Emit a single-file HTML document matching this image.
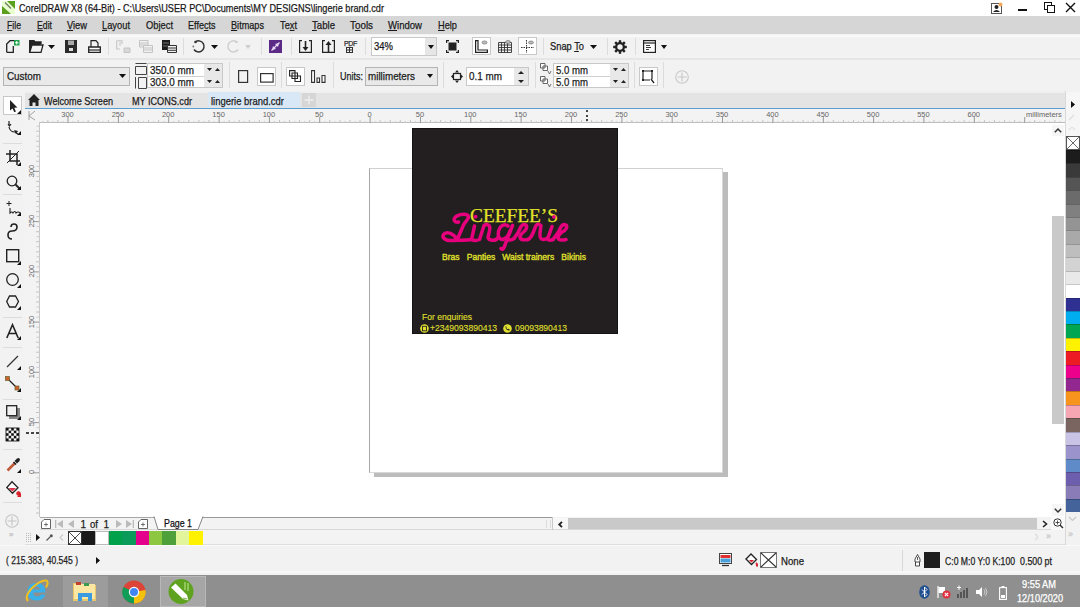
<!DOCTYPE html><html><head><meta charset="utf-8"><style>
*{margin:0;padding:0;box-sizing:border-box}
html,body{width:1080px;height:607px;overflow:hidden;background:#f0f0f0;font-family:"Liberation Sans",sans-serif;font-size:11px;color:#222}
.a{position:absolute}
.t{position:absolute;white-space:nowrap;line-height:1;-webkit-text-stroke:0.25px currentColor}
svg{position:absolute;overflow:visible}
</style></head><body>
<div class="a" style="left:0;top:0;width:1080px;height:16px;background:#fff"></div>
<svg style="left:2px;top:1px" width="13" height="13" viewBox="0 0 13 13"><rect x="0" y="0" width="13" height="13" fill="#5aa01c"/><polygon points="0,0 5,0 13,8 13,13 9,13 0,5" fill="#e8ffd0"/><path d="M3 1.5 L9 7.5" stroke="#6a7a60" stroke-width="1.2"/></svg>
<div class="t" id="t1" style="left:19px;top:3px;font-size:10.5px;color:#1a1a1a;transform:scaleX(0.8724);transform-origin:0 0;">CorelDRAW X8 (64-Bit) - C:\Users\USER PC\Documents\MY DESIGNS\lingerie brand.cdr</div>
<svg style="left:991px;top:2px" width="12" height="12" viewBox="0 0 12 12"><rect x="0.5" y="1.5" width="10" height="10" fill="#fff" stroke="#555"/><circle cx="5.5" cy="5" r="2" fill="#222"/><path d="M2 10 Q5.5 6 9 10Z" fill="#222"/><circle cx="9.5" cy="2.5" r="2" fill="#f5a65b"/></svg>
<div class="a" style="left:1018px;top:9px;width:9px;height:2px;background:#111"></div>
<svg style="left:1044px;top:2px" width="11" height="11" viewBox="0 0 11 11"><rect x="0.5" y="0.5" width="7" height="7" fill="none" stroke="#111"/><rect x="3.5" y="3.5" width="7" height="7" fill="#fff" stroke="#111"/></svg>
<svg style="left:1065px;top:3px" width="11" height="9" viewBox="0 0 11 9"><path d="M1 0 L10 9 M10 0 L1 9" stroke="#111" stroke-width="1.4"/></svg>
<div class="a" style="left:0;top:16px;width:1080px;height:18px;background:#d6d6d6"></div>
<div class="t" id="t2" style="left:7px;top:20px;font-size:11px;color:#1a1a1a;transform:scaleX(0.7887);transform-origin:0 0;"><u>F</u>ile</div>
<div class="t" id="t3" style="left:37px;top:20px;font-size:11px;color:#1a1a1a;transform:scaleX(0.7908);transform-origin:0 0;"><u>E</u>dit</div>
<div class="t" id="t4" style="left:67px;top:20px;font-size:11px;color:#1a1a1a;transform:scaleX(0.8454);transform-origin:0 0;"><u>V</u>iew</div>
<div class="t" id="t5" style="left:102px;top:20px;font-size:11px;color:#1a1a1a;transform:scaleX(0.8473);transform-origin:0 0;"><u>L</u>ayout</div>
<div class="t" id="t6" style="left:146px;top:20px;font-size:11px;color:#1a1a1a;transform:scaleX(0.8491);transform-origin:0 0;">Object</div>
<div class="t" id="t7" style="left:188px;top:20px;font-size:11px;color:#1a1a1a;transform:scaleX(0.8224);transform-origin:0 0;">Effe<u>c</u>ts</div>
<div class="t" id="t8" style="left:231px;top:20px;font-size:11px;color:#1a1a1a;transform:scaleX(0.8302);transform-origin:0 0;"><u>B</u>itmaps</div>
<div class="t" id="t9" style="left:280px;top:20px;font-size:11px;color:#1a1a1a;transform:scaleX(0.8421);transform-origin:0 0;">Te<u>x</u>t</div>
<div class="t" id="t10" style="left:312px;top:20px;font-size:11px;color:#1a1a1a;transform:scaleX(0.8746);transform-origin:0 0;"><u>T</u>able</div>
<div class="t" id="t11" style="left:350px;top:20px;font-size:11px;color:#1a1a1a;transform:scaleX(0.8954);transform-origin:0 0;">T<u>o</u>ols</div>
<div class="t" id="t12" style="left:388px;top:20px;font-size:11px;color:#1a1a1a;transform:scaleX(0.8687);transform-origin:0 0;"><u>W</u>indow</div>
<div class="t" id="t13" style="left:438px;top:20px;font-size:11px;color:#1a1a1a;transform:scaleX(0.8392);transform-origin:0 0;"><u>H</u>elp</div>
<div class="a" style="left:0;top:34px;width:1080px;height:24px;background:#f2f2f2"></div>
<div class="a" style="left:0;top:35px;width:1080px;height:1.5px;background:#f9f9f9"></div>
<svg style="left:6px;top:40px" width="14" height="13" viewBox="0 0 14 13"><path d="M0.7 12.3 V4 L4 0.7 H8 M0.7 12.3 H7.3 V6" fill="none" stroke="#222" stroke-width="1.3"/><rect x="8" y="0" width="5.5" height="5.5" fill="#1fa04a"/><path d="M10.75 1 V4.5 M9 2.75 H12.5" stroke="#fff" stroke-width="1"/></svg>
<svg style="left:29px;top:40px" width="15" height="13" viewBox="0 0 15 13"><path d="M0.7 12.3 V0.7 H5 L6 2 H12 V4" fill="#222" stroke="#222" stroke-width="1.3"/><path d="M0.7 12.3 L3 5 H14 L12 12.3 Z" fill="#f2f2f2" stroke="#222" stroke-width="1.3"/></svg>
<svg style="left:48px;top:45px" width="7" height="4" viewBox="0 0 7 4"><polygon points="0,0 7,0 3.5,4" fill="#111"/></svg>
<svg style="left:65px;top:40px" width="12" height="13" viewBox="0 0 12 13"><rect x="0" y="0" width="12" height="13" fill="#2a2a2a"/><rect x="3" y="0.5" width="6" height="4.5" fill="#aaa"/><rect x="4" y="8" width="4" height="3" fill="#ddd"/></svg>
<svg style="left:88px;top:40px" width="13" height="13" viewBox="0 0 13 13"><path d="M3 7 V0.7 H8 L10 3 V7" fill="none" stroke="#222" stroke-width="1.2"/><path d="M0.7 7 V12.3 H12.3 V7 Z" fill="#fff" stroke="#222" stroke-width="1.3"/><path d="M0.7 10 H12.3" stroke="#222" stroke-width="1.2"/></svg>
<div class="a" style="left:108px;top:38px;width:1px;height:17px;background:#dcdcdc"></div>
<svg style="left:116px;top:40px" width="15" height="13" viewBox="0 0 15 13"><path d="M0.7 0.7 H6 V4 M0.7 0.7 V9 H4 M3 3 H5 M3 5 H5" fill="none" stroke="#c4c4c4" stroke-width="1.1"/><path d="M8 8 H14 V12.5 H8 Z" fill="#d8d8d8" stroke="#c4c4c4" stroke-width="1"/></svg>
<svg style="left:139px;top:40px" width="14" height="13" viewBox="0 0 14 13"><path d="M0.5 0.5 H9 V7 H0.5 Z M0.5 3 H9 M0.5 5 H9" fill="none" stroke="#c4c4c4" stroke-width="1"/><path d="M4.5 5.5 H13.5 V12.5 H4.5 Z M4.5 8 H13.5 M4.5 10 H13.5" fill="#f2f2f2" stroke="#c4c4c4" stroke-width="1"/></svg>
<svg style="left:162px;top:40px" width="15" height="13" viewBox="0 0 15 13"><rect x="0" y="0" width="8" height="10" fill="#1a1a1a"/><path d="M1 3 H7 M1 6 H7" stroke="#888" stroke-width="0.8"/><path d="M5.5 5.5 H14.5 V12.5 H5.5 Z M5.5 8 H14.5 M5.5 10.3 H14.5" fill="#f2f2f2" stroke="#333" stroke-width="1"/></svg>
<div class="a" style="left:183px;top:38px;width:1px;height:17px;background:#dcdcdc"></div>
<svg style="left:192px;top:40px" width="13" height="13" viewBox="0 0 13 13"><path d="M4 1.5 A5.5 5.5 0 1 1 2 9.5" fill="none" stroke="#333" stroke-width="1.5" stroke-dasharray="0"/><circle cx="3.5" cy="2" r="1.3" fill="#333"/><circle cx="1.3" cy="6.5" r="0.9" fill="#777"/></svg>
<svg style="left:211px;top:45px" width="7" height="4" viewBox="0 0 7 4"><polygon points="0,0 7,0 3.5,4" fill="#111"/></svg>
<svg style="left:227px;top:40px" width="13" height="13" viewBox="0 0 13 13"><path d="M9 1.5 A5.5 5.5 0 1 0 11 9.5" fill="none" stroke="#cfcfcf" stroke-width="1.5"/><circle cx="9.5" cy="2" r="1.3" fill="#cfcfcf"/></svg>
<svg style="left:245px;top:45px" width="6" height="4" viewBox="0 0 6 4"><polygon points="0,0 6,0 3.0,4" fill="#cfcfcf"/></svg>
<div class="a" style="left:261px;top:38px;width:1px;height:17px;background:#dcdcdc"></div>
<svg style="left:269px;top:40px" width="13" height="13" viewBox="0 0 13 13"><rect width="13" height="13" fill="#5b2a86"/><path d="M2.5 10.5 L10.5 2.5" stroke="#e8d8f8" stroke-width="1.3"/><polygon points="4,6 7,9 3,10" fill="#e8d8f8"/><polygon points="6,4 9,7 10,3" fill="#e8d8f8"/></svg>
<div class="a" style="left:291px;top:38px;width:1px;height:17px;background:#dcdcdc"></div>
<svg style="left:299px;top:40px" width="13" height="13" viewBox="0 0 13 13"><path d="M3 0.6 H0.6 V12.4 H12.4 V0.6 H10" fill="none" stroke="#222" stroke-width="1.2"/><path d="M6.5 1 V9" stroke="#222" stroke-width="1.6"/><polygon points="3.5,7 9.5,7 6.5,11" fill="#222"/></svg>
<svg style="left:322px;top:40px" width="13" height="13" viewBox="0 0 13 13"><path d="M3 0.6 H0.6 V12.4 H12.4 V0.6 H10" fill="none" stroke="#222" stroke-width="1.2"/><path d="M6.5 4 V12" stroke="#222" stroke-width="1.6"/><polygon points="3.5,5 9.5,5 6.5,1" fill="#222"/></svg>
<div class="t" style="left:344px;top:40px;font-size:7px;color:#333;letter-spacing:-0.3px">PDF</div>
<svg style="left:346px;top:47px" width="7" height="6" viewBox="0 0 7 6"><rect x="0.5" y="0.5" width="6" height="5" fill="none" stroke="#333"/><path d="M0.5 3 H6.5 M3.5 0.5 V5.5" stroke="#333"/></svg>
<div class="a" style="left:365px;top:38px;width:1px;height:17px;background:#dcdcdc"></div>
<div class="a" style="left:371px;top:37px;width:66px;height:19px;background:#fff;border:1px solid #c8c8c8"></div>
<div class="a" style="left:425px;top:38px;width:11px;height:17px;background:#e6e6e6"></div>
<svg style="left:428px;top:45px" width="6" height="4" viewBox="0 0 6 4"><polygon points="0,0 6,0 3.0,4" fill="#111"/></svg>
<div class="t" id="t14" style="left:374px;top:41px;font-size:11px;color:#1a1a1a;transform:scaleX(0.8624);transform-origin:0 0;">34%</div>
<svg style="left:446px;top:40px" width="13" height="13" viewBox="0 0 13 13"><path d="M0.6 3 V0.6 H3 M10 0.6 H12.4 V3 M12.4 10 V12.4 H10 M3 12.4 H0.6 V10" fill="none" stroke="#222" stroke-width="1.2"/><rect x="2.5" y="2.5" width="8" height="8" fill="#222"/></svg>
<div class="a" style="left:472px;top:37px;width:19px;height:18px;background:#fff;border:1px solid #c8c8c8"></div>
<svg style="left:475px;top:40px" width="13" height="13" viewBox="0 0 13 13"><path d="M0.6 0.6 V12.4 H12.4 V10 H3 V0.6 Z" fill="none" stroke="#222" stroke-width="1.2"/><ellipse cx="9.5" cy="2.5" rx="2.5" ry="1.6" fill="#bbb" stroke="#666" stroke-width="0.6"/></svg>
<svg style="left:498px;top:40px" width="14" height="13" viewBox="0 0 14 13"><path d="M0.5 2.5 H13.5 V12.5 H0.5 Z M0.5 5 H13.5 M0.5 7.5 H13.5 M0.5 10 H13.5 M3.5 2.5 V12.5 M6.5 2.5 V12.5 M9.5 2.5 V12.5" fill="none" stroke="#333" stroke-width="0.9"/><ellipse cx="10" cy="2" rx="2.5" ry="1.5" fill="#bbb" stroke="#666" stroke-width="0.6"/></svg>
<div class="a" style="left:518px;top:37px;width:19px;height:18px;background:#fff;border:1px solid #c8c8c8"></div>
<svg style="left:521px;top:40px" width="13" height="13" viewBox="0 0 13 13"><path d="M5.5 0 V13 M0 7.5 H13" stroke="#333" stroke-width="1" stroke-dasharray="1.5 1"/><ellipse cx="10" cy="2.5" rx="2.5" ry="1.5" fill="#bbb" stroke="#666" stroke-width="0.6"/></svg>
<div class="a" style="left:543px;top:38px;width:1px;height:17px;background:#dcdcdc"></div>
<div class="t" id="t15" style="left:550px;top:41px;font-size:11px;color:#1a1a1a;transform:scaleX(0.8460);transform-origin:0 0;">Snap <u>T</u>o</div>
<svg style="left:590px;top:45px" width="7" height="4" viewBox="0 0 7 4"><polygon points="0,0 7,0 3.5,4" fill="#111"/></svg>
<div class="a" style="left:607px;top:38px;width:1px;height:17px;background:#dcdcdc"></div>
<svg style="left:613px;top:40px" width="14" height="14" viewBox="0 0 14 14"><g transform="translate(7 7)"><circle r="5" fill="#222"/><g fill="#222"><rect x="-1.2" y="-6.8" width="2.4" height="13.6"/><rect x="-1.2" y="-6.8" width="2.4" height="13.6" transform="rotate(45)"/><rect x="-1.2" y="-6.8" width="2.4" height="13.6" transform="rotate(90)"/><rect x="-1.2" y="-6.8" width="2.4" height="13.6" transform="rotate(135)"/></g><circle r="2.7" fill="#f2f2f2"/></g></svg>
<div class="a" style="left:635px;top:38px;width:1px;height:17px;background:#dcdcdc"></div>
<svg style="left:643px;top:40px" width="13" height="13" viewBox="0 0 13 13"><rect x="0.6" y="0.6" width="11.8" height="11.8" fill="#fff" stroke="#222" stroke-width="1.2"/><path d="M0.6 3 H12.4" stroke="#222" stroke-width="1.2"/><path d="M3 5.5 H7 M3 7.5 H8 M3 9.5 H6" stroke="#222" stroke-width="0.9"/></svg>
<svg style="left:661px;top:45px" width="6" height="4" viewBox="0 0 6 4"><polygon points="0,0 6,0 3.0,4" fill="#111"/></svg>
<div class="a" style="left:0;top:58px;width:1080px;height:33px;background:#f2f2f2"></div>
<div class="a" style="left:0;top:58px;width:1080px;height:1.5px;background:#e6e6e6"></div>
<div class="a" style="left:3px;top:67px;width:127px;height:19px;background:#e9e9e9;border:1px solid #b4b4b4"></div>
<div class="t" id="t16" style="left:7px;top:71px;font-size:11px;color:#1a1a1a;transform:scaleX(0.8969);transform-origin:0 0;">Custom</div>
<svg style="left:119px;top:74px" width="7" height="4" viewBox="0 0 7 4"><polygon points="0,0 7,0 3.5,4" fill="#111"/></svg>
<svg style="left:135px;top:63px" width="12" height="26" viewBox="0 0 12 26"><path d="M0.5 0.5 H11.5 M0.5 3.5 H11.5 V11.5 H0.5 Z" fill="none" stroke="#444" stroke-width="1"/><path d="M0.5 14 V25.5 M3.5 14.5 H11.5 V25.5 H3.5 Z" fill="none" stroke="#444" stroke-width="1"/></svg>
<div class="a" style="left:147px;top:63px;width:76px;height:25px;background:#fff;border:1px solid #c8c8c8"></div>
<div class="a" style="left:147px;top:76px;width:76px;height:1px;background:#d0d0d0"></div>
<div class="a" style="left:204px;top:64px;width:18px;height:23px;background:#e8e8e8"></div>
<div class="t" id="t17" style="left:150px;top:65px;font-size:11px;color:#1a1a1a;transform:scaleX(0.8994);transform-origin:0 0;">350.0 mm</div>
<div class="t" id="t18" style="left:150px;top:77px;font-size:11px;color:#1a1a1a;transform:scaleX(0.8994);transform-origin:0 0;">303.0 mm</div>
<svg style="left:207px;top:68px" width="13" height="4" viewBox="0 0 13 4"><polygon points="0,0 5,0 2.5,3" fill="#222"/><polygon points="8,3 13,3 10.5,0" fill="#222"/></svg>
<svg style="left:207px;top:80px" width="13" height="4" viewBox="0 0 13 4"><polygon points="0,0 5,0 2.5,3" fill="#222"/><polygon points="8,3 13,3 10.5,0" fill="#222"/></svg>
<div class="a" style="left:229px;top:62px;width:1px;height:26px;background:#dcdcdc"></div>
<svg style="left:238px;top:70px" width="11" height="13" viewBox="0 0 11 13"><rect x="0.6" y="0.6" width="9" height="11.8" fill="none" stroke="#333" stroke-width="1.2"/></svg>
<div class="a" style="left:257px;top:67px;width:19px;height:19px;background:#fff;border:1px solid #c8c8c8"></div>
<svg style="left:260px;top:73px" width="14" height="10" viewBox="0 0 14 10"><rect x="0.6" y="0.6" width="12.5" height="8.5" fill="none" stroke="#333" stroke-width="1.2"/></svg>
<div class="a" style="left:281px;top:62px;width:1px;height:26px;background:#dcdcdc"></div>
<div class="a" style="left:286px;top:67px;width:19px;height:19px;background:#fff;border:1px solid #c8c8c8"></div>
<svg style="left:289px;top:70px" width="13" height="13" viewBox="0 0 13 13"><path d="M0.6 0.6 H6 V6 H0.6 Z M3 3 H8.5 V8.5 H3 Z M6 6 H11.5 V11.5 H6 Z" fill="#fff" stroke="#222" stroke-width="1.1"/></svg>
<svg style="left:311px;top:70px" width="15" height="13" viewBox="0 0 15 13"><path d="M0.6 0.6 H3.5 V12.4 H0.6 Z M6 8 H8.5 V12.4 H6 Z M11 5.5 H14 V12.4 H11 Z" fill="#fff" stroke="#333" stroke-width="1.1"/></svg>
<div class="a" style="left:333px;top:62px;width:1px;height:26px;background:#dcdcdc"></div>
<div class="t" id="t19" style="left:340px;top:71px;font-size:11px;color:#1a1a1a;transform:scaleX(0.8178);transform-origin:0 0;">Units:</div>
<div class="a" style="left:365px;top:67px;width:73px;height:19px;background:#e9e9e9;border:1px solid #b4b4b4"></div>
<div class="t" id="t20" style="left:368px;top:71px;font-size:11px;color:#1a1a1a;transform:scaleX(0.8942);transform-origin:0 0;">millimeters</div>
<svg style="left:427px;top:74px" width="6" height="4" viewBox="0 0 6 4"><polygon points="0,0 6,0 3.0,4" fill="#111"/></svg>
<div class="a" style="left:443px;top:62px;width:1px;height:26px;background:#dcdcdc"></div>
<svg style="left:451px;top:70px" width="12" height="13" viewBox="0 0 12 13"><rect x="2.5" y="3.5" width="7" height="6" fill="none" stroke="#222" stroke-width="1.2"/><polygon points="6,0 8,2.5 4,2.5" fill="#222"/><polygon points="6,13 8,10.5 4,10.5" fill="#222"/><polygon points="0,6.5 2,4.5 2,8.5" fill="#222"/><polygon points="12,6.5 10,4.5 10,8.5" fill="#222"/></svg>
<div class="a" style="left:466px;top:67px;width:63px;height:19px;background:#fff;border:1px solid #c8c8c8"></div>
<div class="a" style="left:514px;top:68px;width:14px;height:17px;background:#e8e8e8"></div>
<svg style="left:518px;top:71px" width="6" height="12" viewBox="0 0 6 12"><polygon points="0,3 6,3 3,0" fill="#222"/><polygon points="0,9 6,9 3,12" fill="#222"/></svg>
<div class="t" id="t21" style="left:469px;top:71px;font-size:11px;color:#1a1a1a;transform:scaleX(0.8995);transform-origin:0 0;">0.1 mm</div>
<div class="a" style="left:535px;top:62px;width:1px;height:26px;background:#dcdcdc"></div>
<svg style="left:540px;top:63px" width="12" height="26" viewBox="0 0 12 26"><path d="M0.5 0.5 H5 V5 H0.5 Z M3 3 H7.5 V7.5 H3 Z" fill="#fff" stroke="#555" stroke-width="0.9"/><path d="M8 8 L9.5 11 L11 8" fill="none" stroke="#555" stroke-width="0.8"/><path d="M0.5 13.5 H5 V18 H0.5 Z M3 16 H7.5 V20.5 H3 Z" fill="#fff" stroke="#555" stroke-width="0.9"/><path d="M8 21 L9.5 24 L11 21" fill="none" stroke="#555" stroke-width="0.8"/></svg>
<div class="a" style="left:553px;top:63px;width:76px;height:25px;background:#fff;border:1px solid #c8c8c8"></div>
<div class="a" style="left:553px;top:76px;width:76px;height:1px;background:#d0d0d0"></div>
<div class="a" style="left:610px;top:64px;width:18px;height:23px;background:#e8e8e8"></div>
<div class="t" id="t22" style="left:556px;top:65px;font-size:11px;color:#1a1a1a;transform:scaleX(0.8722);transform-origin:0 0;">5.0 mm</div>
<div class="t" id="t23" style="left:556px;top:77px;font-size:11px;color:#1a1a1a;transform:scaleX(0.8722);transform-origin:0 0;">5.0 mm</div>
<svg style="left:613px;top:68px" width="13" height="4" viewBox="0 0 13 4"><polygon points="0,0 5,0 2.5,3" fill="#222"/><polygon points="8,3 13,3 10.5,0" fill="#222"/></svg>
<svg style="left:613px;top:80px" width="13" height="4" viewBox="0 0 13 4"><polygon points="0,0 5,0 2.5,3" fill="#222"/><polygon points="8,3 13,3 10.5,0" fill="#222"/></svg>
<div class="a" style="left:634px;top:62px;width:1px;height:26px;background:#dcdcdc"></div>
<div class="a" style="left:639px;top:67px;width:19px;height:19px;background:#fff;border:1px solid #c8c8c8"></div>
<svg style="left:642px;top:70px" width="13" height="14" viewBox="0 0 13 14"><path d="M1 1 H10 V9 M1 1 V10 H8" fill="none" stroke="#222" stroke-width="1.2"/><rect x="0" y="0" width="2" height="2" fill="#222"/><rect x="9" y="0" width="2" height="2" fill="#222"/><rect x="0" y="9" width="2" height="2" fill="#222"/><path d="M9 9 L12 13" stroke="#222" stroke-width="1.3"/></svg>
<div class="a" style="left:663px;top:62px;width:1px;height:26px;background:#dcdcdc"></div>
<svg style="left:675px;top:70px" width="14" height="14" viewBox="0 0 14 14"><circle cx="7" cy="7" r="6.3" fill="none" stroke="#c8c8c8" stroke-width="1.1"/><path d="M7 2.5 V11.5 M2.5 7 H11.5" stroke="#c8c8c8" stroke-width="1.1"/></svg>
<div class="a" style="left:0;top:91px;width:25px;height:454px;background:#f2f2f2"></div>
<div class="a" style="left:3px;top:143px;width:19px;height:1px;background:#dcdcdc"></div>
<div class="a" style="left:3px;top:194px;width:19px;height:1px;background:#dcdcdc"></div>
<div class="a" style="left:3px;top:317px;width:19px;height:1px;background:#dcdcdc"></div>
<div class="a" style="left:3px;top:347px;width:19px;height:1px;background:#dcdcdc"></div>
<div class="a" style="left:3px;top:399px;width:19px;height:1px;background:#dcdcdc"></div>
<div class="a" style="left:3px;top:449px;width:19px;height:1px;background:#dcdcdc"></div>
<div class="a" style="left:3px;top:502px;width:19px;height:1px;background:#dcdcdc"></div>
<div class="a" style="left:3px;top:96px;width:19px;height:19px;background:#fff;border:1px solid #c8c8c8"></div>
<svg style="left:9.5px;top:99.5px" width="8" height="13" viewBox="0 0 8 13"><polygon points="0,0 0,10.5 2.6,8.4 4.3,12.2 5.9,11.5 4.3,7.8 7.4,7.6" fill="#222"/></svg>
<svg style="left:17px;top:110px" width="4" height="4" viewBox="0 0 4 4"><polygon points="4,0 4,4 0,4" fill="#111"/></svg>
<svg style="left:6px;top:120px" width="16" height="16" viewBox="0 0 16 16"><path d="M3 1 V6 M2 4 L3.5 6 L5 4 M3 7 Q4 12 9 12 L12 14" fill="none" stroke="#222" stroke-width="1.2"/><polygon points="8,10 12,11 10,14" fill="#222"/></svg>
<svg style="left:17px;top:131px" width="4" height="4" viewBox="0 0 4 4"><polygon points="4,0 4,4 0,4" fill="#111"/></svg>
<svg style="left:6px;top:150px" width="16" height="16" viewBox="0 0 16 16"><path d="M4 0 V11 H14 M0 4 H11 V15" fill="none" stroke="#222" stroke-width="1.5"/><path d="M1 13 L13 1" stroke="#222" stroke-width="1"/></svg>
<svg style="left:17px;top:162px" width="4" height="4" viewBox="0 0 4 4"><polygon points="4,0 4,4 0,4" fill="#111"/></svg>
<svg style="left:6px;top:175px" width="16" height="16" viewBox="0 0 16 16"><circle cx="6" cy="6" r="4.8" fill="none" stroke="#222" stroke-width="1.3"/><path d="M9.5 9.5 L14 14" stroke="#222" stroke-width="1.8"/></svg>
<svg style="left:17px;top:186px" width="4" height="4" viewBox="0 0 4 4"><polygon points="4,0 4,4 0,4" fill="#111"/></svg>
<svg style="left:6px;top:201px" width="16" height="15" viewBox="0 0 16 15"><path d="M3 0 V5 M0.5 2.5 H5.5" stroke="#222" stroke-width="1"/><path d="M4 7 V12 Q6 10 7 12 Q9 9 10 12 Q12 10 14 12" fill="none" stroke="#222" stroke-width="1.1"/></svg>
<svg style="left:17px;top:212px" width="4" height="4" viewBox="0 0 4 4"><polygon points="4,0 4,4 0,4" fill="#111"/></svg>
<svg style="left:7px;top:223px" width="12" height="17" viewBox="0 0 12 17"><path d="M5 16 Q1 16 1 12 Q1 8 5 8 Q10 8 10 4 Q10 1 7 1 Q4 1 4 4" fill="none" stroke="#222" stroke-width="1.6"/></svg>
<svg style="left:6px;top:249px" width="16" height="16" viewBox="0 0 16 16"><rect x="0.7" y="0.7" width="12" height="12" fill="none" stroke="#222" stroke-width="1.4"/></svg>
<svg style="left:17px;top:261px" width="4" height="4" viewBox="0 0 4 4"><polygon points="4,0 4,4 0,4" fill="#111"/></svg>
<svg style="left:6px;top:273px" width="16" height="15" viewBox="0 0 16 15"><circle cx="6.5" cy="6.5" r="5.8" fill="none" stroke="#222" stroke-width="1.3"/></svg>
<svg style="left:17px;top:284px" width="4" height="4" viewBox="0 0 4 4"><polygon points="4,0 4,4 0,4" fill="#111"/></svg>
<svg style="left:6px;top:295px" width="16" height="15" viewBox="0 0 16 15"><polygon points="3.5,1 9.5,1 12.5,6.5 9.5,12 3.5,12 0.7,6.5" fill="none" stroke="#222" stroke-width="1.3"/></svg>
<svg style="left:17px;top:306px" width="4" height="4" viewBox="0 0 4 4"><polygon points="4,0 4,4 0,4" fill="#111"/></svg>
<svg style="left:6px;top:324px" width="16" height="16" viewBox="0 0 16 16"><path d="M0.8 14 L6.5 0.8 L12.2 14 M2.8 9.5 H10.2" fill="none" stroke="#222" stroke-width="1.6"/></svg>
<svg style="left:17px;top:336px" width="4" height="4" viewBox="0 0 4 4"><polygon points="4,0 4,4 0,4" fill="#111"/></svg>
<svg style="left:6px;top:354px" width="16" height="16" viewBox="0 0 16 16"><path d="M1 13 L12 2" stroke="#333" stroke-width="1.2"/></svg>
<svg style="left:17px;top:366px" width="4" height="4" viewBox="0 0 4 4"><polygon points="4,0 4,4 0,4" fill="#111"/></svg>
<svg style="left:5px;top:376px" width="17" height="16" viewBox="0 0 17 16"><path d="M3 3 L12 12" stroke="#222" stroke-width="1.2"/><rect x="0.5" y="0.5" width="4" height="4" fill="#d0602a" stroke="#663" stroke-width="0.7"/><rect x="10" y="10" width="4" height="4" fill="#d0602a" stroke="#663" stroke-width="0.7"/></svg>
<svg style="left:17px;top:388px" width="4" height="4" viewBox="0 0 4 4"><polygon points="4,0 4,4 0,4" fill="#111"/></svg>
<svg style="left:6px;top:405px" width="16" height="15" viewBox="0 0 16 15"><rect x="3" y="3" width="11" height="11" fill="#888"/><rect x="0.7" y="0.7" width="10" height="10" fill="#f2f2f2" stroke="#222" stroke-width="1.3"/></svg>
<svg style="left:17px;top:416px" width="4" height="4" viewBox="0 0 4 4"><polygon points="4,0 4,4 0,4" fill="#111"/></svg>
<svg style="left:6px;top:428px" width="13" height="13" viewBox="0 0 12 12"><rect width="12" height="12" fill="#fff" stroke="#111" stroke-width="0.8"/><rect x="0.0" y="0.0" width="2.4" height="2.4" fill="#111"/><rect x="0.0" y="4.8" width="2.4" height="2.4" fill="#111"/><rect x="0.0" y="9.6" width="2.4" height="2.4" fill="#111"/><rect x="2.4" y="2.4" width="2.4" height="2.4" fill="#111"/><rect x="2.4" y="7.2" width="2.4" height="2.4" fill="#111"/><rect x="4.8" y="0.0" width="2.4" height="2.4" fill="#111"/><rect x="4.8" y="4.8" width="2.4" height="2.4" fill="#111"/><rect x="4.8" y="9.6" width="2.4" height="2.4" fill="#111"/><rect x="7.2" y="2.4" width="2.4" height="2.4" fill="#111"/><rect x="7.2" y="7.2" width="2.4" height="2.4" fill="#111"/><rect x="9.6" y="0.0" width="2.4" height="2.4" fill="#111"/><rect x="9.6" y="4.8" width="2.4" height="2.4" fill="#111"/><rect x="9.6" y="9.6" width="2.4" height="2.4" fill="#111"/></svg>
<svg style="left:6px;top:457px" width="16" height="16" viewBox="0 0 16 16"><path d="M1.5 13.5 L9 6" stroke="#c05a3a" stroke-width="2.6"/><path d="M8.5 4 L11 1.5 Q12.5 0.5 13.5 1.5 Q14.5 2.5 13.5 4 L11 6.5 Z" fill="#222"/><path d="M7.5 5 L10 7.5" stroke="#222" stroke-width="1.6"/></svg>
<svg style="left:17px;top:469px" width="4" height="4" viewBox="0 0 4 4"><polygon points="4,0 4,4 0,4" fill="#111"/></svg>
<svg style="left:6px;top:481px" width="17" height="16" viewBox="0 0 17 16"><polygon points="6,0.8 12,6.8 6.5,12.3 0.8,6.5" fill="#fff" stroke="#222" stroke-width="1.3"/><polygon points="2.5,7 10,7 6.5,10.5" fill="#e0304a"/><circle cx="12.5" cy="12.5" r="2.2" fill="#d8202a"/></svg>
<svg style="left:17px;top:493px" width="4" height="4" viewBox="0 0 4 4"><polygon points="4,0 4,4 0,4" fill="#d8202a"/></svg>
<svg style="left:5px;top:514px" width="14" height="14" viewBox="0 0 14 14"><circle cx="7" cy="7" r="6.3" fill="none" stroke="#c4c4c4" stroke-width="1.1"/><path d="M7 2.5 V11.5 M2.5 7 H11.5" stroke="#c4c4c4" stroke-width="1.1"/></svg>
<div class="t" style="left:9px;top:531px;font-size:8px;color:#c0c0c0">&#187;</div>
<div class="a" style="left:25px;top:93px;width:1040px;height:15px;background:#e4e4e4"></div>
<svg style="left:28px;top:94px" width="12" height="12" viewBox="0 0 12 12"><polygon points="6,0 12,6 10.5,6 10.5,12 7.5,12 7.5,8.5 4.5,8.5 4.5,12 1.5,12 1.5,6 0,6" fill="#222"/></svg>
<div class="t" id="t24" style="left:44px;top:96px;font-size:11px;color:#1a1a1a;transform:scaleX(0.8257);transform-origin:0 0;">Welcome Screen</div>
<div class="t" id="t25" style="left:132px;top:96px;font-size:11px;color:#1a1a1a;transform:scaleX(0.8272);transform-origin:0 0;">MY ICONS.cdr</div>
<div class="a" style="left:208px;top:92px;width:92px;height:15px;background:#d9e8f6"></div>
<div class="t" id="t26" style="left:211px;top:96px;font-size:11px;color:#1a1a1a;transform:scaleX(0.8588);transform-origin:0 0;">lingerie brand.cdr</div>
<div class="a" style="left:302px;top:93px;width:14px;height:14px;background:#d6d6d6"></div>
<svg style="left:304px;top:95px" width="10" height="10" viewBox="0 0 10 10"><path d="M5 0.5 V9.5 M0.5 5 H9.5" stroke="#eee" stroke-width="1.3"/></svg>
<div class="a" style="left:25px;top:108px;width:1040px;height:1px;background:#5a9fd4"></div>
<div class="a" style="left:25px;top:109px;width:1040px;height:1px;background:#d6ebf8"></div>
<div class="a" style="left:25px;top:109px;width:1040px;height:14px;background:#f3f3f3"></div>
<div class="a" style="left:25px;top:109px;width:15px;height:409px;background:#f3f3f3"></div>
<div class="a" style="left:39px;top:122px;width:1026px;height:1px;background:#bdbdbd"></div>
<div class="a" style="left:39px;top:122px;width:1px;height:396px;background:#c8c8c8"></div>
<svg style="left:28px;top:111px" width="9" height="9" viewBox="0 0 9 9"><path d="M1 0 V9 M1 5 L7 0 M1 5 L7 9" stroke="#999" stroke-width="0.9" fill="none"/></svg>
<svg style="left:40px;top:109px" width="1025" height="14" viewBox="0 0 1025 14"><rect x="2.3" y="12" width="1" height="2" fill="#cacaca"/><rect x="7.4" y="11" width="1" height="3" fill="#c2c2c2"/><rect x="12.4" y="12" width="1" height="2" fill="#cacaca"/><rect x="17.4" y="11" width="1" height="3" fill="#c2c2c2"/><rect x="22.5" y="12" width="1" height="2" fill="#cacaca"/><rect x="27.5" y="8" width="1" height="6" fill="#999"/><rect x="32.5" y="12" width="1" height="2" fill="#cacaca"/><rect x="37.6" y="11" width="1" height="3" fill="#c2c2c2"/><rect x="42.6" y="12" width="1" height="2" fill="#cacaca"/><rect x="47.6" y="11" width="1" height="3" fill="#c2c2c2"/><rect x="52.7" y="12" width="1" height="2" fill="#cacaca"/><rect x="57.7" y="11" width="1" height="3" fill="#c2c2c2"/><rect x="62.7" y="12" width="1" height="2" fill="#cacaca"/><rect x="67.8" y="11" width="1" height="3" fill="#c2c2c2"/><rect x="72.8" y="12" width="1" height="2" fill="#cacaca"/><rect x="77.9" y="8" width="1" height="6" fill="#999"/><rect x="82.9" y="12" width="1" height="2" fill="#cacaca"/><rect x="87.9" y="11" width="1" height="3" fill="#c2c2c2"/><rect x="93.0" y="12" width="1" height="2" fill="#cacaca"/><rect x="98.0" y="11" width="1" height="3" fill="#c2c2c2"/><rect x="103.0" y="12" width="1" height="2" fill="#cacaca"/><rect x="108.1" y="11" width="1" height="3" fill="#c2c2c2"/><rect x="113.1" y="12" width="1" height="2" fill="#cacaca"/><rect x="118.1" y="11" width="1" height="3" fill="#c2c2c2"/><rect x="123.2" y="12" width="1" height="2" fill="#cacaca"/><rect x="128.2" y="8" width="1" height="6" fill="#999"/><rect x="133.2" y="12" width="1" height="2" fill="#cacaca"/><rect x="138.3" y="11" width="1" height="3" fill="#c2c2c2"/><rect x="143.3" y="12" width="1" height="2" fill="#cacaca"/><rect x="148.3" y="11" width="1" height="3" fill="#c2c2c2"/><rect x="153.4" y="12" width="1" height="2" fill="#cacaca"/><rect x="158.4" y="11" width="1" height="3" fill="#c2c2c2"/><rect x="163.4" y="12" width="1" height="2" fill="#cacaca"/><rect x="168.5" y="11" width="1" height="3" fill="#c2c2c2"/><rect x="173.5" y="12" width="1" height="2" fill="#cacaca"/><rect x="178.6" y="8" width="1" height="6" fill="#999"/><rect x="183.6" y="12" width="1" height="2" fill="#cacaca"/><rect x="188.6" y="11" width="1" height="3" fill="#c2c2c2"/><rect x="193.7" y="12" width="1" height="2" fill="#cacaca"/><rect x="198.7" y="11" width="1" height="3" fill="#c2c2c2"/><rect x="203.7" y="12" width="1" height="2" fill="#cacaca"/><rect x="208.8" y="11" width="1" height="3" fill="#c2c2c2"/><rect x="213.8" y="12" width="1" height="2" fill="#cacaca"/><rect x="218.8" y="11" width="1" height="3" fill="#c2c2c2"/><rect x="223.9" y="12" width="1" height="2" fill="#cacaca"/><rect x="228.9" y="8" width="1" height="6" fill="#999"/><rect x="233.9" y="12" width="1" height="2" fill="#cacaca"/><rect x="239.0" y="11" width="1" height="3" fill="#c2c2c2"/><rect x="244.0" y="12" width="1" height="2" fill="#cacaca"/><rect x="249.0" y="11" width="1" height="3" fill="#c2c2c2"/><rect x="254.1" y="12" width="1" height="2" fill="#cacaca"/><rect x="259.1" y="11" width="1" height="3" fill="#c2c2c2"/><rect x="264.1" y="12" width="1" height="2" fill="#cacaca"/><rect x="269.2" y="11" width="1" height="3" fill="#c2c2c2"/><rect x="274.2" y="12" width="1" height="2" fill="#cacaca"/><rect x="279.2" y="8" width="1" height="6" fill="#999"/><rect x="284.3" y="12" width="1" height="2" fill="#cacaca"/><rect x="289.3" y="11" width="1" height="3" fill="#c2c2c2"/><rect x="294.4" y="12" width="1" height="2" fill="#cacaca"/><rect x="299.4" y="11" width="1" height="3" fill="#c2c2c2"/><rect x="304.4" y="12" width="1" height="2" fill="#cacaca"/><rect x="309.5" y="11" width="1" height="3" fill="#c2c2c2"/><rect x="314.5" y="12" width="1" height="2" fill="#cacaca"/><rect x="319.5" y="11" width="1" height="3" fill="#c2c2c2"/><rect x="324.6" y="12" width="1" height="2" fill="#cacaca"/><rect x="329.6" y="8" width="1" height="6" fill="#999"/><rect x="334.6" y="12" width="1" height="2" fill="#cacaca"/><rect x="339.7" y="11" width="1" height="3" fill="#c2c2c2"/><rect x="344.7" y="12" width="1" height="2" fill="#cacaca"/><rect x="349.7" y="11" width="1" height="3" fill="#c2c2c2"/><rect x="354.8" y="12" width="1" height="2" fill="#cacaca"/><rect x="359.8" y="11" width="1" height="3" fill="#c2c2c2"/><rect x="364.8" y="12" width="1" height="2" fill="#cacaca"/><rect x="369.9" y="11" width="1" height="3" fill="#c2c2c2"/><rect x="374.9" y="12" width="1" height="2" fill="#cacaca"/><rect x="380.0" y="8" width="1" height="6" fill="#999"/><rect x="385.0" y="12" width="1" height="2" fill="#cacaca"/><rect x="390.0" y="11" width="1" height="3" fill="#c2c2c2"/><rect x="395.1" y="12" width="1" height="2" fill="#cacaca"/><rect x="400.1" y="11" width="1" height="3" fill="#c2c2c2"/><rect x="405.1" y="12" width="1" height="2" fill="#cacaca"/><rect x="410.2" y="11" width="1" height="3" fill="#c2c2c2"/><rect x="415.2" y="12" width="1" height="2" fill="#cacaca"/><rect x="420.2" y="11" width="1" height="3" fill="#c2c2c2"/><rect x="425.3" y="12" width="1" height="2" fill="#cacaca"/><rect x="430.3" y="8" width="1" height="6" fill="#999"/><rect x="435.3" y="12" width="1" height="2" fill="#cacaca"/><rect x="440.4" y="11" width="1" height="3" fill="#c2c2c2"/><rect x="445.4" y="12" width="1" height="2" fill="#cacaca"/><rect x="450.4" y="11" width="1" height="3" fill="#c2c2c2"/><rect x="455.5" y="12" width="1" height="2" fill="#cacaca"/><rect x="460.5" y="11" width="1" height="3" fill="#c2c2c2"/><rect x="465.5" y="12" width="1" height="2" fill="#cacaca"/><rect x="470.6" y="11" width="1" height="3" fill="#c2c2c2"/><rect x="475.6" y="12" width="1" height="2" fill="#cacaca"/><rect x="480.6" y="8" width="1" height="6" fill="#999"/><rect x="485.7" y="12" width="1" height="2" fill="#cacaca"/><rect x="490.7" y="11" width="1" height="3" fill="#c2c2c2"/><rect x="495.8" y="12" width="1" height="2" fill="#cacaca"/><rect x="500.8" y="11" width="1" height="3" fill="#c2c2c2"/><rect x="505.8" y="12" width="1" height="2" fill="#cacaca"/><rect x="510.9" y="11" width="1" height="3" fill="#c2c2c2"/><rect x="515.9" y="12" width="1" height="2" fill="#cacaca"/><rect x="520.9" y="11" width="1" height="3" fill="#c2c2c2"/><rect x="526.0" y="12" width="1" height="2" fill="#cacaca"/><rect x="531.0" y="8" width="1" height="6" fill="#999"/><rect x="536.0" y="12" width="1" height="2" fill="#cacaca"/><rect x="541.1" y="11" width="1" height="3" fill="#c2c2c2"/><rect x="546.1" y="12" width="1" height="2" fill="#cacaca"/><rect x="551.1" y="11" width="1" height="3" fill="#c2c2c2"/><rect x="556.2" y="12" width="1" height="2" fill="#cacaca"/><rect x="561.2" y="11" width="1" height="3" fill="#c2c2c2"/><rect x="566.2" y="12" width="1" height="2" fill="#cacaca"/><rect x="571.3" y="11" width="1" height="3" fill="#c2c2c2"/><rect x="576.3" y="12" width="1" height="2" fill="#cacaca"/><rect x="581.4" y="8" width="1" height="6" fill="#999"/><rect x="586.4" y="12" width="1" height="2" fill="#cacaca"/><rect x="591.4" y="11" width="1" height="3" fill="#c2c2c2"/><rect x="596.5" y="12" width="1" height="2" fill="#cacaca"/><rect x="601.5" y="11" width="1" height="3" fill="#c2c2c2"/><rect x="606.5" y="12" width="1" height="2" fill="#cacaca"/><rect x="611.6" y="11" width="1" height="3" fill="#c2c2c2"/><rect x="616.6" y="12" width="1" height="2" fill="#cacaca"/><rect x="621.6" y="11" width="1" height="3" fill="#c2c2c2"/><rect x="626.7" y="12" width="1" height="2" fill="#cacaca"/><rect x="631.7" y="8" width="1" height="6" fill="#999"/><rect x="636.7" y="12" width="1" height="2" fill="#cacaca"/><rect x="641.8" y="11" width="1" height="3" fill="#c2c2c2"/><rect x="646.8" y="12" width="1" height="2" fill="#cacaca"/><rect x="651.8" y="11" width="1" height="3" fill="#c2c2c2"/><rect x="656.9" y="12" width="1" height="2" fill="#cacaca"/><rect x="661.9" y="11" width="1" height="3" fill="#c2c2c2"/><rect x="666.9" y="12" width="1" height="2" fill="#cacaca"/><rect x="672.0" y="11" width="1" height="3" fill="#c2c2c2"/><rect x="677.0" y="12" width="1" height="2" fill="#cacaca"/><rect x="682.0" y="8" width="1" height="6" fill="#999"/><rect x="687.1" y="12" width="1" height="2" fill="#cacaca"/><rect x="692.1" y="11" width="1" height="3" fill="#c2c2c2"/><rect x="697.2" y="12" width="1" height="2" fill="#cacaca"/><rect x="702.2" y="11" width="1" height="3" fill="#c2c2c2"/><rect x="707.2" y="12" width="1" height="2" fill="#cacaca"/><rect x="712.3" y="11" width="1" height="3" fill="#c2c2c2"/><rect x="717.3" y="12" width="1" height="2" fill="#cacaca"/><rect x="722.3" y="11" width="1" height="3" fill="#c2c2c2"/><rect x="727.4" y="12" width="1" height="2" fill="#cacaca"/><rect x="732.4" y="8" width="1" height="6" fill="#999"/><rect x="737.4" y="12" width="1" height="2" fill="#cacaca"/><rect x="742.5" y="11" width="1" height="3" fill="#c2c2c2"/><rect x="747.5" y="12" width="1" height="2" fill="#cacaca"/><rect x="752.5" y="11" width="1" height="3" fill="#c2c2c2"/><rect x="757.6" y="12" width="1" height="2" fill="#cacaca"/><rect x="762.6" y="11" width="1" height="3" fill="#c2c2c2"/><rect x="767.6" y="12" width="1" height="2" fill="#cacaca"/><rect x="772.7" y="11" width="1" height="3" fill="#c2c2c2"/><rect x="777.7" y="12" width="1" height="2" fill="#cacaca"/><rect x="782.8" y="8" width="1" height="6" fill="#999"/><rect x="787.8" y="12" width="1" height="2" fill="#cacaca"/><rect x="792.8" y="11" width="1" height="3" fill="#c2c2c2"/><rect x="797.9" y="12" width="1" height="2" fill="#cacaca"/><rect x="802.9" y="11" width="1" height="3" fill="#c2c2c2"/><rect x="807.9" y="12" width="1" height="2" fill="#cacaca"/><rect x="813.0" y="11" width="1" height="3" fill="#c2c2c2"/><rect x="818.0" y="12" width="1" height="2" fill="#cacaca"/><rect x="823.0" y="11" width="1" height="3" fill="#c2c2c2"/><rect x="828.1" y="12" width="1" height="2" fill="#cacaca"/><rect x="833.1" y="8" width="1" height="6" fill="#999"/><rect x="838.1" y="12" width="1" height="2" fill="#cacaca"/><rect x="843.2" y="11" width="1" height="3" fill="#c2c2c2"/><rect x="848.2" y="12" width="1" height="2" fill="#cacaca"/><rect x="853.2" y="11" width="1" height="3" fill="#c2c2c2"/><rect x="858.3" y="12" width="1" height="2" fill="#cacaca"/><rect x="863.3" y="11" width="1" height="3" fill="#c2c2c2"/><rect x="868.3" y="12" width="1" height="2" fill="#cacaca"/><rect x="873.4" y="11" width="1" height="3" fill="#c2c2c2"/><rect x="878.4" y="12" width="1" height="2" fill="#cacaca"/><rect x="883.4" y="8" width="1" height="6" fill="#999"/><rect x="888.5" y="12" width="1" height="2" fill="#cacaca"/><rect x="893.5" y="11" width="1" height="3" fill="#c2c2c2"/><rect x="898.6" y="12" width="1" height="2" fill="#cacaca"/><rect x="903.6" y="11" width="1" height="3" fill="#c2c2c2"/><rect x="908.6" y="12" width="1" height="2" fill="#cacaca"/><rect x="913.7" y="11" width="1" height="3" fill="#c2c2c2"/><rect x="918.7" y="12" width="1" height="2" fill="#cacaca"/><rect x="923.7" y="11" width="1" height="3" fill="#c2c2c2"/><rect x="928.8" y="12" width="1" height="2" fill="#cacaca"/><rect x="933.8" y="8" width="1" height="6" fill="#999"/><rect x="938.8" y="12" width="1" height="2" fill="#cacaca"/><rect x="943.9" y="11" width="1" height="3" fill="#c2c2c2"/><rect x="948.9" y="12" width="1" height="2" fill="#cacaca"/><rect x="953.9" y="11" width="1" height="3" fill="#c2c2c2"/><rect x="959.0" y="12" width="1" height="2" fill="#cacaca"/><rect x="964.0" y="11" width="1" height="3" fill="#c2c2c2"/><rect x="969.0" y="12" width="1" height="2" fill="#cacaca"/><rect x="974.1" y="11" width="1" height="3" fill="#c2c2c2"/><rect x="979.1" y="12" width="1" height="2" fill="#cacaca"/><rect x="984.2" y="8" width="1" height="6" fill="#999"/><rect x="989.2" y="12" width="1" height="2" fill="#cacaca"/><rect x="994.2" y="11" width="1" height="3" fill="#c2c2c2"/><rect x="999.3" y="12" width="1" height="2" fill="#cacaca"/><rect x="1004.3" y="11" width="1" height="3" fill="#c2c2c2"/><rect x="1009.3" y="12" width="1" height="2" fill="#cacaca"/><rect x="1014.4" y="11" width="1" height="3" fill="#c2c2c2"/><rect x="1019.4" y="12" width="1" height="2" fill="#cacaca"/></svg>
<div class="t" style="left:55.5px;top:111px;width:24px;text-align:center;font-size:7.5px;color:#666;-webkit-text-stroke:0">300</div>
<div class="t" style="left:105.9px;top:111px;width:24px;text-align:center;font-size:7.5px;color:#666;-webkit-text-stroke:0">250</div>
<div class="t" style="left:156.2px;top:111px;width:24px;text-align:center;font-size:7.5px;color:#666;-webkit-text-stroke:0">200</div>
<div class="t" style="left:206.6px;top:111px;width:24px;text-align:center;font-size:7.5px;color:#666;-webkit-text-stroke:0">150</div>
<div class="t" style="left:256.9px;top:111px;width:24px;text-align:center;font-size:7.5px;color:#666;-webkit-text-stroke:0">100</div>
<div class="t" style="left:307.2px;top:111px;width:24px;text-align:center;font-size:7.5px;color:#666;-webkit-text-stroke:0">50</div>
<div class="t" style="left:357.6px;top:111px;width:24px;text-align:center;font-size:7.5px;color:#666;-webkit-text-stroke:0">0</div>
<div class="t" style="left:408.0px;top:111px;width:24px;text-align:center;font-size:7.5px;color:#666;-webkit-text-stroke:0">50</div>
<div class="t" style="left:458.3px;top:111px;width:24px;text-align:center;font-size:7.5px;color:#666;-webkit-text-stroke:0">100</div>
<div class="t" style="left:508.6px;top:111px;width:24px;text-align:center;font-size:7.5px;color:#666;-webkit-text-stroke:0">150</div>
<div class="t" style="left:559.0px;top:111px;width:24px;text-align:center;font-size:7.5px;color:#666;-webkit-text-stroke:0">200</div>
<div class="t" style="left:609.4px;top:111px;width:24px;text-align:center;font-size:7.5px;color:#666;-webkit-text-stroke:0">250</div>
<div class="t" style="left:659.7px;top:111px;width:24px;text-align:center;font-size:7.5px;color:#666;-webkit-text-stroke:0">300</div>
<div class="t" style="left:710.0px;top:111px;width:24px;text-align:center;font-size:7.5px;color:#666;-webkit-text-stroke:0">350</div>
<div class="t" style="left:760.4px;top:111px;width:24px;text-align:center;font-size:7.5px;color:#666;-webkit-text-stroke:0">400</div>
<div class="t" style="left:810.8px;top:111px;width:24px;text-align:center;font-size:7.5px;color:#666;-webkit-text-stroke:0">450</div>
<div class="t" style="left:861.1px;top:111px;width:24px;text-align:center;font-size:7.5px;color:#666;-webkit-text-stroke:0">500</div>
<div class="t" style="left:911.4px;top:111px;width:24px;text-align:center;font-size:7.5px;color:#666;-webkit-text-stroke:0">550</div>
<div class="t" style="left:961.8px;top:111px;width:24px;text-align:center;font-size:7.5px;color:#666;-webkit-text-stroke:0">600</div>
<div class="t" style="left:1026px;top:111px;font-size:7.5px;color:#666;-webkit-text-stroke:0">millimeters</div>
<svg style="left:25px;top:123px" width="15" height="395" viewBox="0 0 15 395"><rect x="11" y="389.5" width="3" height="1" fill="#c4c4c4"/><rect x="11.5" y="384.5" width="2.5" height="1" fill="#cbcbcb"/><rect x="11" y="379.4" width="3" height="1" fill="#c4c4c4"/><rect x="11.5" y="374.4" width="2.5" height="1" fill="#cbcbcb"/><rect x="11" y="369.4" width="3" height="1" fill="#c4c4c4"/><rect x="11.5" y="364.4" width="2.5" height="1" fill="#cbcbcb"/><rect x="11" y="359.3" width="3" height="1" fill="#c4c4c4"/><rect x="11.5" y="354.3" width="2.5" height="1" fill="#cbcbcb"/><rect x="8" y="349.3" width="6" height="1" fill="#999"/><rect x="11.5" y="344.3" width="2.5" height="1" fill="#cbcbcb"/><rect x="11" y="339.3" width="3" height="1" fill="#c4c4c4"/><rect x="11.5" y="334.2" width="2.5" height="1" fill="#cbcbcb"/><rect x="11" y="329.2" width="3" height="1" fill="#c4c4c4"/><rect x="11.5" y="324.2" width="2.5" height="1" fill="#cbcbcb"/><rect x="11" y="319.2" width="3" height="1" fill="#c4c4c4"/><rect x="11.5" y="314.1" width="2.5" height="1" fill="#cbcbcb"/><rect x="11" y="309.1" width="3" height="1" fill="#c4c4c4"/><rect x="11.5" y="304.1" width="2.5" height="1" fill="#cbcbcb"/><rect x="8" y="299.1" width="6" height="1" fill="#999"/><rect x="11.5" y="294.0" width="2.5" height="1" fill="#cbcbcb"/><rect x="11" y="289.0" width="3" height="1" fill="#c4c4c4"/><rect x="11.5" y="284.0" width="2.5" height="1" fill="#cbcbcb"/><rect x="11" y="279.0" width="3" height="1" fill="#c4c4c4"/><rect x="11.5" y="273.9" width="2.5" height="1" fill="#cbcbcb"/><rect x="11" y="268.9" width="3" height="1" fill="#c4c4c4"/><rect x="11.5" y="263.9" width="2.5" height="1" fill="#cbcbcb"/><rect x="11" y="258.9" width="3" height="1" fill="#c4c4c4"/><rect x="11.5" y="253.9" width="2.5" height="1" fill="#cbcbcb"/><rect x="8" y="248.8" width="6" height="1" fill="#999"/><rect x="11.5" y="243.8" width="2.5" height="1" fill="#cbcbcb"/><rect x="11" y="238.8" width="3" height="1" fill="#c4c4c4"/><rect x="11.5" y="233.8" width="2.5" height="1" fill="#cbcbcb"/><rect x="11" y="228.7" width="3" height="1" fill="#c4c4c4"/><rect x="11.5" y="223.7" width="2.5" height="1" fill="#cbcbcb"/><rect x="11" y="218.7" width="3" height="1" fill="#c4c4c4"/><rect x="11.5" y="213.7" width="2.5" height="1" fill="#cbcbcb"/><rect x="11" y="208.6" width="3" height="1" fill="#c4c4c4"/><rect x="11.5" y="203.6" width="2.5" height="1" fill="#cbcbcb"/><rect x="8" y="198.6" width="6" height="1" fill="#999"/><rect x="11.5" y="193.6" width="2.5" height="1" fill="#cbcbcb"/><rect x="11" y="188.5" width="3" height="1" fill="#c4c4c4"/><rect x="11.5" y="183.5" width="2.5" height="1" fill="#cbcbcb"/><rect x="11" y="178.5" width="3" height="1" fill="#c4c4c4"/><rect x="11.5" y="173.5" width="2.5" height="1" fill="#cbcbcb"/><rect x="11" y="168.5" width="3" height="1" fill="#c4c4c4"/><rect x="11.5" y="163.4" width="2.5" height="1" fill="#cbcbcb"/><rect x="11" y="158.4" width="3" height="1" fill="#c4c4c4"/><rect x="11.5" y="153.4" width="2.5" height="1" fill="#cbcbcb"/><rect x="8" y="148.4" width="6" height="1" fill="#999"/><rect x="11.5" y="143.3" width="2.5" height="1" fill="#cbcbcb"/><rect x="11" y="138.3" width="3" height="1" fill="#c4c4c4"/><rect x="11.5" y="133.3" width="2.5" height="1" fill="#cbcbcb"/><rect x="11" y="128.3" width="3" height="1" fill="#c4c4c4"/><rect x="11.5" y="123.2" width="2.5" height="1" fill="#cbcbcb"/><rect x="11" y="118.2" width="3" height="1" fill="#c4c4c4"/><rect x="11.5" y="113.2" width="2.5" height="1" fill="#cbcbcb"/><rect x="11" y="108.2" width="3" height="1" fill="#c4c4c4"/><rect x="11.5" y="103.1" width="2.5" height="1" fill="#cbcbcb"/><rect x="8" y="98.1" width="6" height="1" fill="#999"/><rect x="11.5" y="93.1" width="2.5" height="1" fill="#cbcbcb"/><rect x="11" y="88.1" width="3" height="1" fill="#c4c4c4"/><rect x="11.5" y="83.1" width="2.5" height="1" fill="#cbcbcb"/><rect x="11" y="78.0" width="3" height="1" fill="#c4c4c4"/><rect x="11.5" y="73.0" width="2.5" height="1" fill="#cbcbcb"/><rect x="11" y="68.0" width="3" height="1" fill="#c4c4c4"/><rect x="11.5" y="63.0" width="2.5" height="1" fill="#cbcbcb"/><rect x="11" y="57.9" width="3" height="1" fill="#c4c4c4"/><rect x="11.5" y="52.9" width="2.5" height="1" fill="#cbcbcb"/><rect x="8" y="47.9" width="6" height="1" fill="#999"/><rect x="11.5" y="42.9" width="2.5" height="1" fill="#cbcbcb"/><rect x="11" y="37.8" width="3" height="1" fill="#c4c4c4"/><rect x="11.5" y="32.8" width="2.5" height="1" fill="#cbcbcb"/><rect x="11" y="27.8" width="3" height="1" fill="#c4c4c4"/><rect x="11.5" y="22.8" width="2.5" height="1" fill="#cbcbcb"/><rect x="11" y="17.7" width="3" height="1" fill="#c4c4c4"/><rect x="11.5" y="12.7" width="2.5" height="1" fill="#cbcbcb"/><rect x="11" y="7.7" width="3" height="1" fill="#c4c4c4"/><rect x="11.5" y="2.7" width="2.5" height="1" fill="#cbcbcb"/></svg>
<div class="t" style="left:27.5px;top:460.3px;width:24px;height:8px;text-align:center;font-size:7.5px;color:#666;-webkit-text-stroke:0;transform-origin:0 0;transform:translate(0px,24px) rotate(-90deg)">0</div>
<div class="t" style="left:27.5px;top:410.1px;width:24px;height:8px;text-align:center;font-size:7.5px;color:#666;-webkit-text-stroke:0;transform-origin:0 0;transform:translate(0px,24px) rotate(-90deg)">50</div>
<div class="t" style="left:27.5px;top:359.8px;width:24px;height:8px;text-align:center;font-size:7.5px;color:#666;-webkit-text-stroke:0;transform-origin:0 0;transform:translate(0px,24px) rotate(-90deg)">100</div>
<div class="t" style="left:27.5px;top:309.6px;width:24px;height:8px;text-align:center;font-size:7.5px;color:#666;-webkit-text-stroke:0;transform-origin:0 0;transform:translate(0px,24px) rotate(-90deg)">150</div>
<div class="t" style="left:27.5px;top:259.4px;width:24px;height:8px;text-align:center;font-size:7.5px;color:#666;-webkit-text-stroke:0;transform-origin:0 0;transform:translate(0px,24px) rotate(-90deg)">200</div>
<div class="t" style="left:27.5px;top:209.1px;width:24px;height:8px;text-align:center;font-size:7.5px;color:#666;-webkit-text-stroke:0;transform-origin:0 0;transform:translate(0px,24px) rotate(-90deg)">250</div>
<div class="t" style="left:27.5px;top:158.9px;width:24px;height:8px;text-align:center;font-size:7.5px;color:#666;-webkit-text-stroke:0;transform-origin:0 0;transform:translate(0px,24px) rotate(-90deg)">300</div>
<div class="a" style="left:586px;top:110px;width:2px;height:2px;background:#444"></div>
<div class="a" style="left:586px;top:114.5px;width:2px;height:2px;background:#444"></div>
<div class="a" style="left:586px;top:119px;width:2px;height:2px;background:#444"></div>
<div class="a" style="left:26px;top:432px;width:2.5px;height:1.5px;background:#444"></div>
<div class="a" style="left:31px;top:432px;width:2.5px;height:1.5px;background:#444"></div>
<div class="a" style="left:36px;top:432px;width:2.5px;height:1.5px;background:#444"></div>
<div class="a" style="left:40px;top:123px;width:1025px;height:395px;background:#fff"></div>
<div class="a" style="left:723px;top:172px;width:5px;height:305px;background:#bcbcbc"></div>
<div class="a" style="left:374px;top:473px;width:354px;height:4px;background:#bcbcbc"></div>
<div class="a" style="left:369px;top:168px;width:354px;height:305px;background:#fff;border-left:1px solid #a8a8a8;border-top:1px solid #d0d0d0;border-right:1px solid #d8d8d8;border-bottom:1px solid #d8d8d8"></div>
<div class="a" style="left:412px;top:128px;width:206px;height:206px;background:#231f20;border:1px solid #141414"></div>
<div class="t" id="t27" style="left:470px;top:206px;font-size:19px;color:#e2e22a;font-family:&quot;Liberation Serif&quot;,serif;transform:scaleX(1.0166);transform-origin:0 0;">CEEFEE&#8217;S</div>
<svg style="left:438px;top:205px" width="140" height="50" viewBox="438 205 140 50"><g fill="none" stroke="#e6007e" stroke-width="3.5" stroke-linecap="round" stroke-linejoin="round"><path d="M458.5 222 C454.5 223 452.5 219.5 456 216.5 C460 213.5 467.5 213.5 468.5 216.5 C469 219 465.5 221 463.5 225 L457.5 239"/><path d="M457 239 C453 233 446 231 443.5 234.5 C441.5 238 446 241 452 240.5 C458 240 466 240.5 471.5 239.5"/><path d="M474.5 226 L471.5 239.5 Q475 241.5 479.5 239.5 L484 225.5 Q487 223 489.5 226 Q490.5 229 489 233 L488 237.5 Q489 241 495 240"/><path d="M508 226 Q504 223 500.5 227 Q497.5 231 498.5 236.5 Q500 240.5 504 239 Q508 237 510 231"/><path d="M512.5 225.5 L504 247.5 Q502.5 250.5 501 248.5"/><path d="M495 240 Q497 239.5 498.5 237 M507 239.5 Q511 241 514 238.5"/><path d="M514 238.5 Q518 234 521 226.5 Q523 223.5 526 225 Q528 228 524 231.5 Q521 234 520 236.5 Q520 241 528 239.5"/><path d="M528 239.5 Q531 238 533 233 L536 225.5 Q538 223 541 225.5 L540 233 Q539.5 239.5 543 239.5 Q546 239.5 547.5 238"/><path d="M552 226.5 L547.5 239 Q549 241 553 239.5"/><path d="M553 239.5 Q558 234 561.5 226 Q563.5 223.5 566.5 225.5 Q568 229 562 232 Q558 235 558 238 Q559 241 566 239.5"/></g><circle cx="475.6" cy="216.7" r="1.9" fill="#e6007e"/><circle cx="553.9" cy="216.9" r="1.9" fill="#e6007e"/></svg>
<div class="t" id="t28" style="left:442px;top:253px;font-size:9px;color:#e0e02c;-webkit-text-stroke:0.35px currentColor;transform:scaleX(0.9491);transform-origin:0 0;">Bras&nbsp;&nbsp;&nbsp;Panties&nbsp;&nbsp;&nbsp;Waist trainers&nbsp;&nbsp;&nbsp;Bikinis</div>
<div class="t" id="t29" style="left:422px;top:313px;font-size:9px;color:#e0e02c;-webkit-text-stroke:0.1px currentColor;transform:scaleX(0.9518);transform-origin:0 0;">For enquiries</div>
<svg style="left:420px;top:324px" width="9" height="9" viewBox="0 0 9 9"><circle cx="4.5" cy="4.5" r="4.3" fill="#e0e030"/><rect x="2.5" y="2.3" width="4" height="4.5" fill="none" stroke="#231f20" stroke-width="0.9"/></svg>
<div class="t" id="t30" style="left:430px;top:324px;font-size:9px;color:#e0e02c;-webkit-text-stroke:0.1px currentColor;transform:scaleX(0.9527);transform-origin:0 0;">+2349093890413</div>
<svg style="left:503px;top:324px" width="9" height="9" viewBox="0 0 9 9"><circle cx="4.5" cy="4.5" r="4.3" fill="#e0e030"/><path d="M2.5 2.5 Q2.5 6.5 6.5 6.5 L6.5 5.3 L5.2 4.8 L4.7 5.3 Q3.7 4.8 3.2 3.8 L3.7 3.3 L3.2 2.2 Z" fill="#231f20"/></svg>
<div class="t" id="t31" style="left:515px;top:324px;font-size:9px;color:#e0e02c;-webkit-text-stroke:0.1px currentColor;transform:scaleX(0.9444);transform-origin:0 0;">09093890413</div>
<div class="a" style="left:1052px;top:125px;width:12px;height:11px;background:#f6f6f6"></div>
<svg style="left:1054px;top:128px" width="8" height="5" viewBox="0 0 8 5"><path d="M0.8 4.2 L4 1 L7.2 4.2" fill="none" stroke="#333" stroke-width="1.5"/></svg>
<div class="a" style="left:1052px;top:216px;width:12px;height:208px;background:#c9c9c9"></div>
<div class="a" style="left:1052px;top:504px;width:12px;height:12px;background:#f6f6f6"></div>
<svg style="left:1054px;top:508px" width="8" height="5" viewBox="0 0 8 5"><path d="M0.8 0.8 L4 4 L7.2 0.8" fill="none" stroke="#333" stroke-width="1.5"/></svg>
<div class="a" style="left:40px;top:517px;width:1025px;height:13px;background:#f3f3f3"></div>
<div class="a" style="left:40px;top:517px;width:513px;height:1px;background:#a8a8a8"></div>
<div class="a" style="left:546px;top:520px;width:5px;height:8px;border-left:1px solid #ddd;border-right:1px solid #ddd"></div>
<div class="a" style="left:553px;top:518px;width:15px;height:12px;background:#f8f8f8"></div>
<div class="a" style="left:25px;top:517px;width:15px;height:28px;background:#f3f3f3"></div>
<div class="a" style="left:40px;top:529px;width:1025px;height:1px;background:#d8d8d8"></div>
<svg style="left:41px;top:519px" width="10" height="10" viewBox="0 0 10 10"><path d="M0.5 3 L3 0.5 H9.5 V9.5 H0.5 Z" fill="#fff" stroke="#555" stroke-width="0.9"/><path d="M5 3.5 V7.5 M3 5.5 H7" stroke="#555" stroke-width="0.8"/></svg>
<svg style="left:55px;top:520px" width="8" height="8" viewBox="0 0 8 8"><rect x="0" y="0" width="1.3" height="8" fill="#bbb"/><polygon points="8,0 8,8 2,4" fill="#bbb"/></svg>
<svg style="left:68px;top:520px" width="6" height="8" viewBox="0 0 6 8"><polygon points="6,0 6,8 0,4" fill="#bbb"/></svg>
<div class="t" id="t32" style="left:80.5px;top:520px;font-size:10px;color:#222;">1</div>
<div class="t" id="t33" style="left:90px;top:520px;font-size:10px;color:#222;transform:scaleX(0.9588);transform-origin:0 0;">of</div>
<div class="t" id="t34" style="left:103.5px;top:520px;font-size:10px;color:#222;">1</div>
<svg style="left:116px;top:520px" width="6" height="8" viewBox="0 0 6 8"><polygon points="0,0 0,8 6,4" fill="#bbb"/></svg>
<svg style="left:126px;top:520px" width="8" height="8" viewBox="0 0 8 8"><polygon points="0,0 0,8 6,4" fill="#bbb"/><rect x="6.7" y="0" width="1.3" height="8" fill="#bbb"/></svg>
<svg style="left:138px;top:519px" width="10" height="10" viewBox="0 0 10 10"><path d="M0.5 3 L3 0.5 H9.5 V9.5 H0.5 Z" fill="#fff" stroke="#555" stroke-width="0.9"/><path d="M5 3.5 V7.5 M3 5.5 H7" stroke="#555" stroke-width="0.8"/></svg>
<svg style="left:154px;top:516px" width="50" height="14" viewBox="0 0 50 14"><path d="M0 0.5 L4 13.5 H44 L49 0.5" fill="#fff" stroke="#777" stroke-width="0.9"/></svg>
<div class="t" id="t35" style="left:164px;top:519px;font-size:10px;color:#111;transform:scaleX(0.8832);transform-origin:0 0;">Page 1</div>
<div class="a" style="left:203px;top:517px;width:350px;height:1px;background:#999"></div>
<div class="a" style="left:552px;top:517px;width:1px;height:13px;background:#c8c8c8"></div>
<svg style="left:558px;top:521px" width="5" height="7" viewBox="0 0 5 7"><path d="M4 0.8 L1.2 3.5 L4 6.2" fill="none" stroke="#222" stroke-width="1.8"/></svg>
<div class="a" style="left:568px;top:518px;width:469px;height:11px;background:#c9c9c9"></div>
<svg style="left:1042px;top:520px" width="6" height="8" viewBox="0 0 6 8"><path d="M1 1 L4.5 4 L1 7" fill="none" stroke="#222" stroke-width="1.6"/></svg>
<div class="a" style="left:1051px;top:517px;width:14px;height:13px;background:#fafafa"></div>
<svg style="left:1053px;top:518px" width="11" height="11" viewBox="0 0 11 11"><circle cx="4.5" cy="4.5" r="3.7" fill="none" stroke="#333" stroke-width="1"/><path d="M7 7 L10 10" stroke="#333" stroke-width="1.5"/><path d="M4.5 2.5 V6.5 M2.5 4.5 H6.5" stroke="#333" stroke-width="0.8"/></svg>
<div class="a" style="left:25px;top:530px;width:1040px;height:15px;background:#f3f3f3"></div>
<div class="a" style="left:25px;top:544px;width:1040px;height:1px;background:#dedede"></div>
<svg style="left:26px;top:533px" width="6" height="9" viewBox="0 0 6 9"><rect x="0" y="0" width="1" height="1" fill="#bbb"/><rect x="0" y="2" width="1" height="1" fill="#bbb"/><rect x="0" y="4" width="1" height="1" fill="#bbb"/><rect x="0" y="6" width="1" height="1" fill="#bbb"/><rect x="0" y="8" width="1" height="1" fill="#bbb"/><rect x="2" y="0" width="1" height="1" fill="#bbb"/><rect x="2" y="2" width="1" height="1" fill="#bbb"/><rect x="2" y="4" width="1" height="1" fill="#bbb"/><rect x="2" y="6" width="1" height="1" fill="#bbb"/><rect x="2" y="8" width="1" height="1" fill="#bbb"/><rect x="4" y="0" width="1" height="1" fill="#bbb"/><rect x="4" y="2" width="1" height="1" fill="#bbb"/><rect x="4" y="4" width="1" height="1" fill="#bbb"/><rect x="4" y="6" width="1" height="1" fill="#bbb"/><rect x="4" y="8" width="1" height="1" fill="#bbb"/></svg>
<svg style="left:36px;top:534px" width="4" height="7" viewBox="0 0 4 7"><polygon points="0,0 4,3.5 0,7" fill="#111"/></svg>
<svg style="left:46px;top:534px" width="7" height="7" viewBox="0 0 7 7"><path d="M0.5 6.5 L4.5 2.5" stroke="#555" stroke-width="1.1"/><circle cx="5.3" cy="1.7" r="1.5" fill="#555"/></svg>
<svg style="left:59px;top:534px" width="5" height="7" viewBox="0 0 5 7"><path d="M4 0.5 L1 3.5 L4 6.5" fill="none" stroke="#ccc" stroke-width="1.2"/></svg>
<svg style="left:68px;top:531px" width="14" height="14" viewBox="0 0 14 14"><rect x="0.5" y="0.5" width="13" height="13" fill="#fff" stroke="#333" stroke-width="1"/><path d="M0.5 0.5 L13.5 13.5 M13.5 0.5 L0.5 13.5" stroke="#333" stroke-width="0.9"/></svg>
<div class="a" style="left:82px;top:531px;width:13.5px;height:14px;background:#1a1a1a;"></div>
<div class="a" style="left:95.4px;top:531px;width:13.5px;height:14px;background:#ffffff;border:1px solid #bbb;"></div>
<div class="a" style="left:108.80000000000001px;top:531px;width:13.5px;height:14px;background:#00a14b;"></div>
<div class="a" style="left:122.20000000000002px;top:531px;width:13.5px;height:14px;background:#0a9a5a;"></div>
<div class="a" style="left:135.60000000000002px;top:531px;width:13.5px;height:14px;background:#e4008c;"></div>
<div class="a" style="left:149.00000000000003px;top:531px;width:13.5px;height:14px;background:#8dc63f;"></div>
<div class="a" style="left:162.40000000000003px;top:531px;width:13.5px;height:14px;background:#4da03a;"></div>
<div class="a" style="left:175.80000000000004px;top:531px;width:13.5px;height:14px;background:#e2f59a;"></div>
<div class="a" style="left:189.20000000000005px;top:531px;width:13.5px;height:14px;background:#fff200;"></div>
<div class="a" style="left:1065px;top:91px;width:15px;height:454px;background:#f2f2f2"></div>
<div class="a" style="left:1065px;top:91px;width:1px;height:454px;background:#d8d8d8"></div>
<div class="a" style="left:1066px;top:92px;width:14px;height:44px;background:#f6f6f6"></div>
<svg style="left:1071px;top:101px" width="4" height="7" viewBox="0 0 4 7"><polygon points="0,0 4,3.5 0,7" fill="#111"/></svg>
<svg style="left:1068px;top:113px" width="8" height="8" viewBox="0 0 8 8"><path d="M1 7 L6 2" stroke="#ddd" stroke-width="1.2"/></svg>
<svg style="left:1068px;top:125px" width="8" height="6" viewBox="0 0 8 6"><path d="M1 5 Q4 0 7 5" fill="none" stroke="#ddd" stroke-width="1.2"/></svg>
<svg style="left:1066px;top:136px" width="14" height="14" viewBox="0 0 14 14"><rect x="0.5" y="0.5" width="13" height="13" fill="#fff" stroke="#555" stroke-width="1"/><path d="M0.5 0.5 L13.5 13.5 M13.5 0.5 L0.5 13.5" stroke="#444" stroke-width="0.8"/></svg>
<div class="a" style="left:1066px;top:149.90px;width:14px;height:13.5px;background:#1c1c1c;border-top:1px solid rgba(0,0,0,0.22)"></div>
<div class="a" style="left:1066px;top:163.32px;width:14px;height:13.5px;background:#3a3a3a;border-top:1px solid rgba(0,0,0,0.22)"></div>
<div class="a" style="left:1066px;top:176.74px;width:14px;height:13.5px;background:#555555;border-top:1px solid rgba(0,0,0,0.22)"></div>
<div class="a" style="left:1066px;top:190.16px;width:14px;height:13.5px;background:#6b6b6b;border-top:1px solid rgba(0,0,0,0.22)"></div>
<div class="a" style="left:1066px;top:203.58px;width:14px;height:13.5px;background:#808080;border-top:1px solid rgba(0,0,0,0.22)"></div>
<div class="a" style="left:1066px;top:217.00px;width:14px;height:13.5px;background:#949494;border-top:1px solid rgba(0,0,0,0.22)"></div>
<div class="a" style="left:1066px;top:230.42px;width:14px;height:13.5px;background:#a9a9a9;border-top:1px solid rgba(0,0,0,0.22)"></div>
<div class="a" style="left:1066px;top:243.84px;width:14px;height:13.5px;background:#bebebe;border-top:1px solid rgba(0,0,0,0.22)"></div>
<div class="a" style="left:1066px;top:257.26px;width:14px;height:13.5px;background:#d3d3d3;border-top:1px solid rgba(0,0,0,0.22)"></div>
<div class="a" style="left:1066px;top:270.68px;width:14px;height:13.5px;background:#e9e9e9;border-top:1px solid rgba(0,0,0,0.22)"></div>
<div class="a" style="left:1066px;top:284.10px;width:14px;height:13.5px;background:#ffffff;border-top:1px solid rgba(0,0,0,0.22)"></div>
<div class="a" style="left:1066px;top:297.52px;width:14px;height:13.5px;background:#2e3192;border-top:1px solid rgba(0,0,0,0.22)"></div>
<div class="a" style="left:1066px;top:310.94px;width:14px;height:13.5px;background:#00aeef;border-top:1px solid rgba(0,0,0,0.22)"></div>
<div class="a" style="left:1066px;top:324.36px;width:14px;height:13.5px;background:#00a651;border-top:1px solid rgba(0,0,0,0.22)"></div>
<div class="a" style="left:1066px;top:337.78px;width:14px;height:13.5px;background:#fff200;border-top:1px solid rgba(0,0,0,0.22)"></div>
<div class="a" style="left:1066px;top:351.20px;width:14px;height:13.5px;background:#ed1c24;border-top:1px solid rgba(0,0,0,0.22)"></div>
<div class="a" style="left:1066px;top:364.62px;width:14px;height:13.5px;background:#ec008c;border-top:1px solid rgba(0,0,0,0.22)"></div>
<div class="a" style="left:1066px;top:378.04px;width:14px;height:13.5px;background:#92278f;border-top:1px solid rgba(0,0,0,0.22)"></div>
<div class="a" style="left:1066px;top:391.46px;width:14px;height:13.5px;background:#f7941d;border-top:1px solid rgba(0,0,0,0.22)"></div>
<div class="a" style="left:1066px;top:404.88px;width:14px;height:13.5px;background:#f6a5b2;border-top:1px solid rgba(0,0,0,0.22)"></div>
<div class="a" style="left:1066px;top:418.30px;width:14px;height:13.5px;background:#7a6560;border-top:1px solid rgba(0,0,0,0.22)"></div>
<div class="a" style="left:1066px;top:431.72px;width:14px;height:13.5px;background:#c9c3e6;border-top:1px solid rgba(0,0,0,0.22)"></div>
<div class="a" style="left:1066px;top:445.14px;width:14px;height:13.5px;background:#9b93cc;border-top:1px solid rgba(0,0,0,0.22)"></div>
<div class="a" style="left:1066px;top:458.56px;width:14px;height:13.5px;background:#5f8cc8;border-top:1px solid rgba(0,0,0,0.22)"></div>
<div class="a" style="left:1066px;top:471.98px;width:14px;height:13.5px;background:#6e5fae;border-top:1px solid rgba(0,0,0,0.22)"></div>
<div class="a" style="left:1066px;top:485.40px;width:14px;height:13.5px;background:#8a7cb6;border-top:1px solid rgba(0,0,0,0.22)"></div>
<div class="a" style="left:1066px;top:498.82px;width:14px;height:13.5px;background:#44639a;border-top:1px solid rgba(0,0,0,0.22)"></div>
<div class="a" style="left:1066px;top:513px;width:14px;height:32px;background:#f2f2f2"></div>
<svg style="left:1068px;top:516px" width="9" height="6" viewBox="0 0 9 6"><path d="M1 1 L4.5 4.5 L8 1" fill="none" stroke="#c8c8c8" stroke-width="1.2"/></svg>
<div class="t" style="left:1068px;top:530px;font-size:9px;color:#c8c8c8">&#187;</div>
<svg style="left:1033px;top:533px" width="8" height="8" viewBox="0 0 8 8"><path d="M2 1 Q7 4 2 7" fill="none" stroke="#d8d8d8" stroke-width="1.2"/></svg>
<div class="t" style="left:1046px;top:532px;font-size:9px;color:#c8c8c8">&#187;</div>
<div class="a" style="left:0;top:545px;width:1080px;height:30px;background:#f2f2f2"></div>
<div class="a" style="left:0;top:545px;width:1080px;height:1px;background:#fafafa"></div>
<div class="a" style="left:0;top:571px;width:1080px;height:2px;background:#f8f8f8"></div>
<div class="t" id="t36" style="left:6px;top:556px;font-size:10px;color:#222;transform:scaleX(0.8519);transform-origin:0 0;">( 215.383, 40.545 )</div>
<svg style="left:96px;top:557px" width="4" height="7" viewBox="0 0 4 7"><polygon points="0,0 4,3.5 0,7" fill="#111"/></svg>
<svg style="left:719px;top:553px" width="13" height="14" viewBox="0 0 13 14"><rect x="0.5" y="0.5" width="12" height="10" fill="#fff" stroke="#444" stroke-width="1"/><rect x="1.5" y="2" width="10" height="3" fill="#e03030"/><rect x="1.5" y="5.5" width="10" height="4" fill="#4aa0d8"/><path d="M3 12.5 H10" stroke="#333" stroke-width="1.3"/></svg>
<svg style="left:745px;top:553px" width="14" height="14" viewBox="0 0 14 14"><polygon points="6,1 11.5,6.5 6.5,11.5 1,6" fill="#fff" stroke="#222" stroke-width="1.4"/><polygon points="4,7 9,7 6.5,9.5" fill="#d82030"/><path d="M11 10 Q13 12 11.5 13.5" stroke="#d82030" stroke-width="1.8" fill="none"/></svg>
<svg style="left:760px;top:552px" width="17" height="16" viewBox="0 0 17 16"><rect x="0.5" y="0.5" width="16" height="15" fill="#fff" stroke="#777" stroke-width="1"/><path d="M1 1 L16 15 M16 1 L1 15" stroke="#333" stroke-width="1.1"/></svg>
<div class="t" id="t37" style="left:781px;top:557px;font-size:10px;color:#222;transform:scaleX(0.9621);transform-origin:0 0;">None</div>
<div class="a" style="left:902px;top:550px;width:1px;height:21px;background:#d8d8d8"></div>
<svg style="left:914px;top:554px" width="7" height="13" viewBox="0 0 7 13"><path d="M3.5 0.5 L6 5 V8 H1 V5 Z M1.5 8 V12 H5.5 V8" fill="#fff" stroke="#333" stroke-width="0.9"/><path d="M3.5 3 V6" stroke="#333" stroke-width="0.8"/></svg>
<div class="a" style="left:924px;top:552px;width:16px;height:16px;background:#1e1e1e"></div>
<div class="t" id="t38" style="left:945px;top:557px;font-size:10px;color:#222;transform:scaleX(0.8644);transform-origin:0 0;">C:0 M:0 Y:0 K:100</div>
<div class="t" id="t39" style="left:1020px;top:557px;font-size:10px;color:#222;transform:scaleX(0.8850);transform-origin:0 0;">0.500 pt</div>
<div class="a" style="left:0;top:575px;width:1080px;height:32px;background:#8f8f8f"></div>
<div class="a" style="left:63px;top:576px;width:45px;height:31px;background:#9c9c9c"></div>
<div class="a" style="left:160px;top:576px;width:46px;height:31px;background:#a6a6a6;border:1px solid #b8b8b8"></div>
<svg style="left:24px;top:578px" width="25" height="25" viewBox="0 0 25 25"><path d="M3.5 14 Q3.5 5 12.5 5 Q21.5 5 21.5 14.5 H9 Q9.5 18.5 13 18.5 Q16 18.5 17.5 16.5 H21.5 Q19.5 22.5 12.5 22.5 Q3.5 22.5 3.5 14Z M9 11.5 H16 Q15.5 8.5 12.5 8.5 Q9.5 8.5 9 11.5Z" fill="#3ab0ea"/><path d="M4 23 Q0 19 8 10 Q17 1.5 22.5 2.5 Q25 4.5 22 9.5" fill="none" stroke="#f0c020" stroke-width="2"/></svg>
<svg style="left:72px;top:580px" width="26" height="23" viewBox="0 0 26 23"><path d="M1 3 H9 L11 5 H24 V21 H1 Z" fill="#e8c66a"/><rect x="2" y="4" width="21" height="15" fill="#fbe7a2"/><rect x="4" y="2" width="5" height="3" fill="#c04030"/><rect x="12" y="3" width="5" height="3" fill="#3a9a50"/><path d="M6 21 V13 H20 V21 H16 V17 H10 V21 Z" fill="#3c9ae0"/></svg>
<svg style="left:122px;top:580px" width="24" height="24" viewBox="0 0 24 24"><circle cx="12" cy="12" r="11.5" fill="#db4437"/><path d="M12 12 L2 18 A11.5 11.5 0 0 1 1.0 9 Z" fill="#0f9d58"/><path d="M12 12 L1.5 7 A11.5 11.5 0 0 0 12 23.5 L18 13 Z" fill="#0f9d58"/><path d="M12 12 L23.5 10 A11.5 11.5 0 0 1 12 23.5 Z" fill="#f4c20d"/><circle cx="12" cy="12" r="5.2" fill="#fff"/><circle cx="12" cy="12" r="4" fill="#4285f4"/></svg>
<svg style="left:168px;top:579px" width="26" height="25" viewBox="0 0 26 25"><circle cx="13" cy="12.5" r="12.5" fill="#5ea21f"/><path d="M3 8.5 L7.5 4.5 L19 16 L20.5 21.5 L15 20 Z" fill="#fff"/><path d="M15 19 L19.5 20" stroke="#5ea21f" stroke-width="0.8"/><path d="M17 3 V11 M20 4 V12" stroke="#b8e888" stroke-width="1.1"/></svg>
<svg style="left:919px;top:585px" width="11" height="14" viewBox="0 0 11 14"><ellipse cx="5.5" cy="7" rx="5.3" ry="6.8" fill="#1f4f8f"/><path d="M3 4.5 L8 9.5 L5.5 12 V2 L8 4.5 L3 9.5" fill="none" stroke="#fff" stroke-width="1"/></svg>
<svg style="left:937px;top:586px" width="14" height="13" viewBox="0 0 14 13"><path d="M1 0 V12" stroke="#fff" stroke-width="1.2"/><path d="M1.5 1 H8 V7 H1.5 Z" fill="#fff"/><circle cx="9.5" cy="8.5" r="4" fill="#e03040"/><path d="M7.8 6.8 L11.2 10.2 M11.2 6.8 L7.8 10.2" stroke="#fff" stroke-width="1.1"/></svg>
<svg style="left:956px;top:585px" width="13" height="14" viewBox="0 0 13 14"><rect x="1" y="9" width="2" height="4" fill="#555"/><rect x="4" y="7" width="2" height="6" fill="#555"/><rect x="7" y="5" width="2" height="8" fill="#555"/><rect x="10" y="3" width="2" height="10" fill="#555"/><path d="M3 0.5 V5 M1 2.5 H5" stroke="#fff" stroke-width="1"/></svg>
<svg style="left:976px;top:586px" width="12" height="12" viewBox="0 0 12 12"><polygon points="0,4 3,4 6,1 6,11 3,8 0,8" fill="#fff"/><path d="M8 3.5 Q10 6 8 8.5 M9.5 2 Q12.5 6 9.5 10" fill="none" stroke="#ccc" stroke-width="1"/></svg>
<svg style="left:999px;top:586px" width="8" height="14" viewBox="0 0 8 14"><rect x="0.6" y="1.6" width="6.8" height="11.8" fill="none" stroke="#fff" stroke-width="1.1"/><rect x="2.5" y="0" width="3" height="1.6" fill="#fff"/><rect x="2" y="9" width="4" height="3" fill="#fff"/></svg>
<div class="t" id="t40" style="left:1022px;top:580px;font-size:10px;color:#fff;transform:scaleX(0.9264);transform-origin:0 0;">9:55 AM</div>
<div class="t" id="t41" style="left:1017px;top:594px;font-size:10px;color:#fff;transform:scaleX(0.9189);transform-origin:0 0;">12/10/2020</div>
</body></html>
